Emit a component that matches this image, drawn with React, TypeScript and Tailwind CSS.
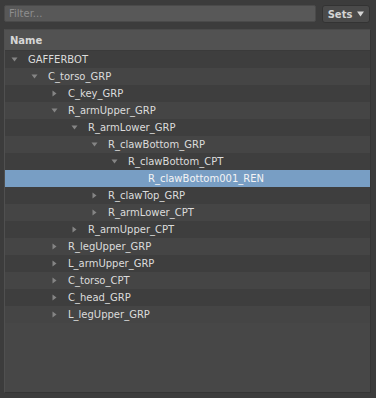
import React from "react";

type Row = { name: string; depth: number; arrow: "down" | "right" | "none" };

const rows: Row[] = [
  { name: "GAFFERBOT", depth: 0, arrow: "down" },
  { name: "C_torso_GRP", depth: 1, arrow: "down" },
  { name: "C_key_GRP", depth: 2, arrow: "right" },
  { name: "R_armUpper_GRP", depth: 2, arrow: "down" },
  { name: "R_armLower_GRP", depth: 3, arrow: "down" },
  { name: "R_clawBottom_GRP", depth: 4, arrow: "down" },
  { name: "R_clawBottom_CPT", depth: 5, arrow: "down" },
  { name: "R_clawBottom001_REN", depth: 6, arrow: "none" },
  { name: "R_clawTop_GRP", depth: 4, arrow: "right" },
  { name: "R_armLower_CPT", depth: 4, arrow: "right" },
  { name: "R_armUpper_CPT", depth: 3, arrow: "right" },
  { name: "R_legUpper_GRP", depth: 2, arrow: "right" },
  { name: "L_armUpper_GRP", depth: 2, arrow: "right" },
  { name: "C_torso_CPT", depth: 2, arrow: "right" },
  { name: "C_head_GRP", depth: 2, arrow: "right" },
  { name: "L_legUpper_GRP", depth: 2, arrow: "right" },
];

function Arrow({ dir }: { dir: Row["arrow"] }) {
  if (dir === "none") return <span className="w-[14px]" />;
  return (
    <span className="w-[14px] flex items-center justify-center">
      {dir === "down" ? (
        <svg width="7" height="5" viewBox="0 0 7 5">
          <path d="M0.5 0.5 L6.5 0.5 L3.5 4.5 Z" fill="#858585" />
        </svg>
      ) : (
        <svg width="5" height="7" viewBox="0 0 5 7">
          <path d="M0.5 0.5 L4.5 3.5 L0.5 6.5 Z" fill="#858585" />
        </svg>
      )}
    </span>
  );
}

export default function App() {
  return (
    <div
      className="w-[376px] h-[398px] bg-[#3c3c3c] px-[4px] pt-[5px] text-[10px] text-[#dcdcdc]"
      style={{ fontFamily: '"DejaVu Sans", sans-serif' }}
    >
      <div className="flex gap-[6px] items-start h-[18px]">
        <div className="w-[312px] h-[17px] bg-[#585858] border border-[#4a4a4a] rounded-[2px] flex items-center pl-[4px] text-[#8e8e8e]">
          Filter...
        </div>
        <div className="w-[48px] h-[18px] bg-[#4a4a4a] border border-[#333333] rounded-[3px] flex items-center justify-center gap-[5px] font-bold text-[#d4d4d4]">
          <span>Sets</span>
          <svg width="7" height="6" viewBox="0 0 7 6">
            <path d="M0 0.5 L7 0.5 L3.5 5.5 Z" fill="#d4d4d4" />
          </svg>
        </div>
      </div>

      <div className="mt-[6px] w-[367px] h-[364px] bg-[#474747] border border-[#353535] border-l-[#505050] border-t-[#4a4a4a] flex flex-col">
        <div className="h-[21px] bg-[#525252] border-b border-[#3a3a3a] flex items-center pl-[5px] font-bold text-[#d6d6d6]">
          Name
        </div>
        {rows.map((r, i) => {
          const selected = r.name === "R_clawBottom001_REN";
          const bg = selected
            ? "bg-[#789ec4] text-[#f4f4f4]"
            : i % 2 === 1
            ? "bg-[#454545]"
            : "bg-[#3e3e3e]";
          return (
            <div
              key={r.name}
              className={`h-[17px] flex items-center ${bg}`}
              style={{ paddingLeft: 2 + r.depth * 20 }}
            >
              <Arrow dir={r.arrow} />
              <span className="ml-[7px] whitespace-nowrap">{r.name}</span>
            </div>
          );
        })}
      </div>
    </div>
  );
}
